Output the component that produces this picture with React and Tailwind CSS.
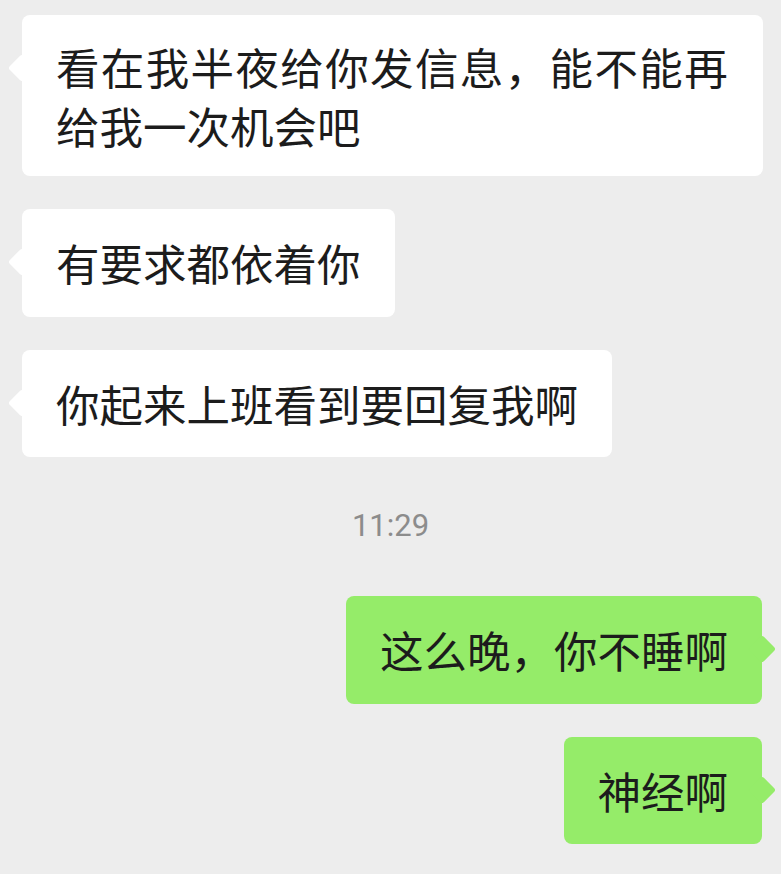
import React from 'react';

const messages = [
  { id: 1, side: 'left', lines: ['看在我半夜给你发信息，能不能再', '给我一次机会吧'] },
  { id: 2, side: 'left', lines: ['有要求都依着你'] },
  { id: 3, side: 'left', lines: ['你起来上班看到要回复我啊'] },
  { id: 4, side: 'time', text: '11:29' },
  { id: 5, side: 'right', lines: ['这么晚，你不睡啊'] },
  { id: 6, side: 'right', lines: ['神经啊'] },
];

const Bubble = ({ side, lines }) => {
  const isLeft = side === 'left';
  const multi = lines.length > 1;

  return (
    <div className={isLeft ? 'flex justify-start pl-[22px]' : 'flex justify-end pr-[19px]'}>
      <div
        className={
          'relative rounded-[8px] px-[34px] text-[43.5px] leading-[59px] text-[#1c1c1c] ' +
          (isLeft ? 'bg-white ' : 'bg-[#95ec69] ') +
          (multi ? 'pt-[22px] pb-[21px]' : 'pt-[24px] pb-[24.5px]')
        }
      >
        {/* 말풍선 꼬리 */}
        <span
          className={
            'absolute top-[43px] h-[20px] w-[20px] rotate-45 rounded-[3px] ' +
            (isLeft ? 'left-[-10px] bg-white' : 'right-[-10px] bg-[#95ec69]')
          }
        />
        <div className="relative">
          {lines.map((line, i) => (
            <div
              key={i}
              className={multi && i === 0 ? 'whitespace-nowrap tracking-[1.37px]' : 'whitespace-nowrap'}
            >
              {line}
            </div>
          ))}
        </div>
      </div>
    </div>
  );
};

const App = () => {
  return (
    <div
      className="h-[874px] w-full overflow-hidden bg-[#ededed] pt-[15px]"
      style={{ fontFamily: '"Noto Sans CJK SC", "Noto Sans", sans-serif' }}
    >
      <div className="flex flex-col gap-[33px]">
        {messages.slice(0, 3).map((m) => (
          <Bubble key={m.id} side={m.side} lines={m.lines} />
        ))}
      </div>

      {/* 시간 표시 */}
      <div className="mt-[49px] mb-[50px] text-center font-['Roboto',sans-serif] text-[31px] leading-[40px] text-[#8c8c8c]">
        11:29
      </div>

      <div className="flex flex-col gap-[33px]">
        {messages.slice(4).map((m) => (
          <Bubble key={m.id} side={m.side} lines={m.lines} />
        ))}
      </div>
    </div>
  );
};

export default App;
